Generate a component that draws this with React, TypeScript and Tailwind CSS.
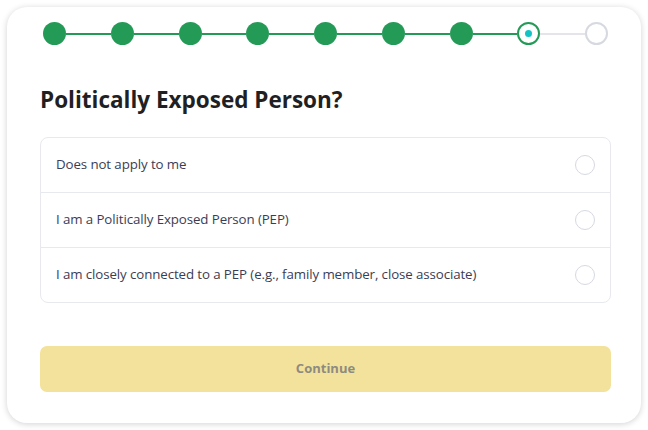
const steps = 9;
const current = 7;

const options = [
  "Does not apply to me",
  "I am a Politically Exposed Person (PEP)",
  "I am closely connected to a PEP (e.g., family member, close associate)",
];

function Stepper() {
  return (
    <div className="flex items-center px-[3px]">
      {Array.from({ length: steps }).map((_, i) => (
        <div key={i} className={i === steps - 1 ? "flex items-center" : "flex flex-1 items-center"}>
          {i < current ? (
            <span className="h-[23px] w-[23px] shrink-0 rounded-full bg-[#249a57]" />
          ) : i === current ? (
            <span className="flex h-[23px] w-[23px] shrink-0 items-center justify-center rounded-full border-2 border-[#249a57] bg-white">
              <span className="h-[7px] w-[7px] rounded-full bg-[#14c4c4]" />
            </span>
          ) : (
            <span className="h-[23px] w-[23px] shrink-0 rounded-full border-2 border-[#d6d9e0] bg-white" />
          )}
          {i < steps - 1 && (
            <span className={i < current ? "h-[2px] flex-1 bg-[#249a57]" : "h-[2px] flex-1 bg-[#e3e5ea]"} />
          )}
        </div>
      ))}
    </div>
  );
}

export default function App() {
  return (
    <div className="h-[430px] w-[648px] bg-white p-[7px] font-['Open_Sans','Noto_Sans',sans-serif]">
      <div className="flex h-[416px] w-[634px] flex-col rounded-[20px] bg-white pb-[31px] pl-[33px] pr-[30px] pt-[15px] shadow-[0_1px_6px_rgba(0,0,0,0.18)]">
        <Stepper />
        <h1 className="mt-[42px] text-[22.5px] font-bold leading-[26px] text-[#1f1f24]">
          Politically Exposed Person?
        </h1>
        <div className="mt-[24px] rounded-[8px] border border-[#e8e9ee]">
          {options.map((o, i) => (
            <div
              key={o}
              className={
                i > 0
                  ? "flex h-[55px] items-center justify-between border-t border-[#e8e9ee] pl-[15px] pr-[15px]"
                  : "flex h-[54px] items-center justify-between pl-[15px] pr-[15px]"
              }
            >
              <span className="text-[13.3px] tracking-[-0.1px] text-[#3a3d55]">{o}</span>
              <span className="h-[20px] w-[20px] rounded-full border-[1.5px] border-[#d7d9e2] bg-white" />
            </div>
          ))}
        </div>
        <button
          type="button"
          className="mt-auto h-[46px] w-full rounded-[7px] bg-[#f3e29b] text-[13px] font-bold text-[#8d8b80]"
        >
          Continue
        </button>
      </div>
    </div>
  );
}
